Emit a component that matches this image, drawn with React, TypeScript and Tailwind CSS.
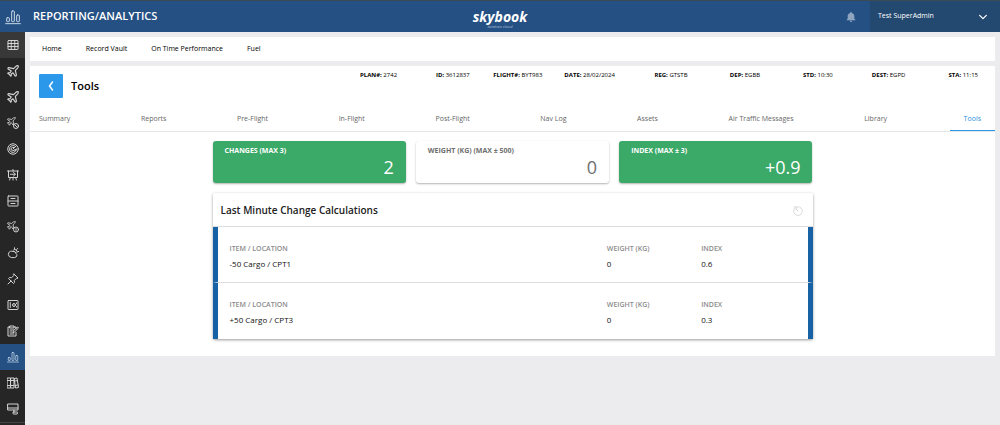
import type { ReactNode } from 'react';
import clsx from 'clsx';

// ============= Types =============
interface IconProps {
  children: ReactNode;
  className?: string;
}

interface StatCardProps {
  label: string;
  value: string;
  highlighted?: boolean;
}

interface SidebarItem {
  label: string;
  icon: ReactNode;
}

// ============= Icons =============
const Icon = ({ children, className = 'size-3' }: IconProps) => (
  <svg
    viewBox="0 0 24 24"
    fill="none"
    stroke="currentColor"
    strokeWidth="2"
    strokeLinecap="round"
    strokeLinejoin="round"
    className={className}
    aria-hidden="true"
  >
    {children}
  </svg>
);

const PLANE =
  'M17.8 19.2 16 11l3.5-3.5C21 6 21.5 4 21 3c-1-.5-3 0-4.500 1.500L13 8 4.800 6.200c-.5-.1-.9.1-1.100.5l-.3.5c-.2.5-.1 1 .3 1.300L9 12l-2 3H4l-1 1 3 2 2 3 1-1v-3l3-2 3.500 5.300c.3.4.8.5 1.300.3l.5-.2c.4-.3.6-.7.5-1.200z';

const PlaneIcon = () => (
  <Icon className="size-3.5">
    <path d={PLANE} />
  </Icon>
);

const BarsIcon = ({ className }: { className?: string }) => (
  <Icon className={className}>
    <path strokeWidth="1.500" d="M1 22h22" />
    <g strokeWidth="1.500">
      <rect x="2.500" y="13" width="4" height="6" rx="1" />
      <rect x="10" y="3" width="4" height="16" rx="1" />
      <rect x="17.500" y="9" width="4" height="10" rx="1" />
    </g>
  </Icon>
);

// ============= Data =============
const SIDEBAR_ITEMS: SidebarItem[] = [
  {
    label: 'Dashboard',
    icon: (
      <Icon>
        <rect x="2" y="3" width="20" height="18" rx="1" />
        <path d="M2 9h20M2 15h20M8.500 3v18M15.500 3v18" />
      </Icon>
    )
  },
  { label: 'Flights', icon: <PlaneIcon /> },
  { label: 'Flight Plans', icon: <PlaneIcon /> },
  {
    label: 'Cancelled Flights',
    icon: (
      <Icon>
        <g transform="translate(-2 -2) scale(.88)">
          <path d={PLANE} />
        </g>
        <circle cx="18" cy="18" r="5" fill="#262626" />
        <path d="m15 15 6 6" />
      </Icon>
    )
  },
  {
    label: 'Radar',
    icon: (
      <Icon>
        <circle cx="12" cy="12" r="10.500" />
        <path d="M17 7a7 7 0 1 0 2 5M12 12l7-7M13.500 15a3.500 3.500 0 1 1 0-6" />
        <circle cx="16" cy="14" r="1" />
      </Icon>
    )
  },
  {
    label: 'Briefing',
    icon: (
      <Icon>
        <path d="M1 4h22M3 4v13h18V4M12 1v3M7 17l-2 5M17 17l2 5M12 17v5" />
        <path d="M7 10.500h9M13 7l4 3.500-4 3.500" />
      </Icon>
    )
  },
  {
    label: 'Storage',
    icon: (
      <Icon>
        <rect x="2" y="2" width="20" height="20" rx="1" />
        <path d="M2 12h20M8 7h8M8 17h8" />
      </Icon>
    )
  },
  {
    label: 'Flight Alerts',
    icon: (
      <Icon>
        <g transform="translate(-2 -2) scale(.88)">
          <path d={PLANE} />
        </g>
        <circle cx="18" cy="17" r="5" fill="#262626" />
        <path d="M18 15v2M18 19.500v.1" />
      </Icon>
    )
  },
  {
    label: 'Weather',
    icon: (
      <Icon>
        <path d="M8 21a6.500 6.500 0 0 1-1-12.500 7 7 0 0 1 5 .5 5 5 0 0 1 6 4 4.500 4.500 0 0 1-2 8z" />
        <path d="M13 6a4.500 4.500 0 0 1 7 5M15 1.500v2M21 3l-1.500 2M22 9h1.500" />
      </Icon>
    )
  },
  {
    label: 'Pinned',
    icon: (
      <Icon>
        <path d="m14 2 8 8-2 1-1-.5-4.500 4.500.5 4-2 2L3 11l2-2 4 .5L13.500 5 13 4zM8 16l-6 6" />
      </Icon>
    )
  },
  {
    label: 'Manuals',
    icon: (
      <Icon>
        <rect x="2" y="3" width="20" height="18" rx="1" />
        <path d="M6.500 7v10" />
        <circle cx="14" cy="12" r="3" />
        <path d="M14 12h.1M19 8v1M19 15v1" />
      </Icon>
    )
  },
  {
    label: 'Forms',
    icon: (
      <Icon>
        <path d="M18 15v7H2V4h4M14 4h4v3" />
        <path d="M6 2h8v4H6zM6 10h7M6 14h4M6 18h8" />
        <path d="m12 15 1-4 8-7 2 2-8 8z" />
      </Icon>
    )
  },
  { label: 'Reporting', icon: <BarsIcon className="size-3" /> },
  {
    label: 'Library',
    icon: (
      <Icon>
        <path d="M1 2h6v20H1zM8 2h6v20H8zM15 3l5-1 3 19-5 1z" />
        <path d="M1 7h6M8 7h6M1 17h6M8 17h6M16 8l5-1M17 17l5-1" />
      </Icon>
    )
  },
  {
    label: 'Devices',
    icon: (
      <Icon>
        <path d="M2 2h20v12H2zM2 10h20M14 14v4" />
        <rect x="12" y="18" width="9" height="4" rx="1" />
      </Icon>
    )
  }
];

const ACTIVE_ITEM = 'Reporting';

const NAV_LINKS = ['Home', 'Record Vault', 'On Time Performance', 'Fuel'];

const FLIGHT_DETAILS = [
  { label: 'PLAN#:', value: '2742' },
  { label: 'ID:', value: '3612837' },
  { label: 'FLIGHT#:', value: 'BYT983' },
  { label: 'DATE:', value: '28/02/2024' },
  { label: 'REG:', value: 'GTSTB' },
  { label: 'DEP:', value: 'EGBB' },
  { label: 'STD:', value: '10:30' },
  { label: 'DEST:', value: 'EGPD' },
  { label: 'STA:', value: '11:15' }
];

const TABS = [
  'Summary',
  'Reports',
  'Pre-Flight',
  'In-Flight',
  'Post-Flight',
  'Nav Log',
  'Assets',
  'Air Traffic Messages',
  'Library',
  'Tools'
];

const CHANGES = [
  { item: '-50 Cargo / CPT1', weight: '0', index: '0.6' },
  { item: '+50 Cargo / CPT3', weight: '0', index: '0.3' }
];

// ============= Components =============
const Header = () => (
  <header className="grid h-8 grid-cols-[1fr_auto_1fr] items-center border-t border-[#3b4b55] bg-[#255083] text-white">
    <div className="flex items-center gap-2">
      <div className="flex w-[25px] justify-center text-[#c9d8e8]">
        <BarsIcon className="size-4" />
      </div>
      <h1 className="text-[11px] font-semibold">REPORTING/ANALYTICS</h1>
    </div>
    <a href="#" className="flex flex-col items-center pt-1" aria-label="skybook aviation cloud">
      <span className="text-[14px] leading-4 font-bold italic">skybook</span>
      <span className="text-[4px] leading-1 text-[#a9c0da] italic">aviation cloud</span>
    </a>
    <div className="flex h-full items-center justify-end">
      <button className="mr-3.5 text-[#8fa5bf]" aria-label="Notifications">
        <svg viewBox="0 0 24 24" fill="currentColor" className="size-2.5" aria-hidden="true">
          <path d="M12 0a2 2 0 0 0-2 2v.5C6 3.400 4 6.500 4 10v6l-3 3v1h22v-1l-3-3v-6c0-3.500-2-6.600-6-7.500V2a2 2 0 0 0-2-2zM9 21a3 3 0 0 0 6 0z" />
        </svg>
      </button>
      <button className="flex h-full w-[130px] items-center justify-between bg-[#244970] pr-3 pl-2 text-[7px]">
        Test SuperAdmin
        <Icon className="size-2.5">
          <path strokeWidth="3" d="m4 8 8 8 8-8" />
        </Icon>
      </button>
    </div>
  </header>
);

const Sidebar = () => (
  <aside className="w-[25px] shrink-0 bg-[#262626]">
    <nav className="flex flex-col border-b border-[#444444]">
      {SIDEBAR_ITEMS.map(({ label, icon }, i) => (
        <a
          key={label}
          href="#"
          aria-label={label}
          className={clsx(
            'flex h-[26px] items-center justify-center',
            label === ACTIVE_ITEM ? 'bg-[#255083] text-[#c3d6ea]' : 'text-[#d4d4d4]',
            i === 0 && 'bg-[#383838]'
          )}
        >
          {icon}
        </a>
      ))}
    </nav>
  </aside>
);

const StatCard = ({ label, value, highlighted }: StatCardProps) => (
  <div
    className={clsx(
      'flex flex-col rounded-[3px] px-3 pt-1.5 pb-1 shadow-[0_1px_2px_rgba(0,0,0,0.3)]',
      highlighted ? 'bg-[#3ba968] text-white' : 'bg-white text-[#6f6f6f]'
    )}
  >
    <span className="text-[7px] leading-2 font-bold">{label}</span>
    <span className="text-right text-[18px] leading-6">{value}</span>
  </div>
);

const Field = ({ label, value }: { label: string; value: string }) => (
  <div>
    <dt className="text-[7px] leading-2 font-semibold text-[#8c8c8c]">{label}</dt>
    <dd className="mt-[3px] text-[8px] leading-4 text-[#111111]">{value}</dd>
  </div>
);

const ChangeCalculations = () => (
  <section className="mt-2.5 rounded-xs shadow-[0_1px_3px_rgba(0,0,0,0.4)]">
    <header className="flex h-[34px] items-center justify-between border-b border-[#dddddd] pt-0.5 pr-2.5 pl-2">
      <h3 className="text-[10px] font-semibold text-[#222222]">Last Minute Change Calculations</h3>
      <button className="text-[#d2d2d6]" aria-label="History">
        <Icon className="size-2.5">
          <path d="M8 2.500A10.500 10.500 0 1 0 16 2.500M3 2l5 .5-.5 5M12 12 8 8M12 1v3" />
        </Icon>
      </button>
    </header>
    {CHANGES.map(({ item, weight, index }) => (
      <dl
        key={item}
        className="grid h-14 grid-cols-[4fr_1fr_1fr] border-x-[5px] border-x-[#1762a5] px-3 pt-[18px] not-last:border-b not-last:border-b-[#dedede]"
      >
        <Field label="ITEM / LOCATION" value={item} />
        <Field label="WEIGHT (KG)" value={weight} />
        <Field label="INDEX" value={index} />
      </dl>
    ))}
  </section>
);

// ============= Main Component =============
export default function App() {
  return (
    <div className="flex min-h-screen flex-col bg-[#ececee] font-['Open_Sans',sans-serif] text-black">
      <Header />
      <div className="flex flex-1">
        <Sidebar />
        <div className="min-w-0 flex-1 p-[5px]">
          <nav className="flex h-6 items-center gap-6 bg-white px-3 text-[7px]">
            {NAV_LINKS.map((link) => (
              <a key={link} href="#">
                {link}
              </a>
            ))}
          </nav>

          <main className="mt-[5px] bg-white pb-[17px]">
            <div className="flex items-start justify-between pt-[3px] pr-[17px] pl-[9px]">
              <div className="flex items-center gap-2 pt-[5px]">
                <button
                  className="flex size-6 items-center justify-center rounded-[1px] bg-[#2b98ea] text-white"
                  aria-label="Back"
                >
                  <Icon className="size-3">
                    <path strokeWidth="3" d="m15 4-6 8 6 8" />
                  </Icon>
                </button>
                <h2 className="text-[11px] font-semibold">Tools</h2>
              </div>
              <ul className="grid w-[69.6%] grid-cols-9 text-right text-[6px] leading-3 whitespace-nowrap">
                {FLIGHT_DETAILS.map(({ label, value }) => (
                  <li key={label}>
                    <b>{label}</b> {value}
                  </li>
                ))}
              </ul>
            </div>

            <div
              role="tablist"
              className="mt-2 flex h-[26px] justify-between border-b border-[#e6e6e6] pt-0.5 pl-px text-[7px] text-[#666666]"
            >
              {TABS.map((tab) => (
                <button
                  key={tab}
                  role="tab"
                  aria-selected={tab === 'Tools'}
                  className={clsx(
                    'whitespace-nowrap',
                    tab === 'Tools' ? 'border-b border-[#2b98ea] px-3.5 text-[#2b8fdc]' : 'px-2'
                  )}
                >
                  {tab}
                </button>
              ))}
            </div>

            <div className="mx-auto mt-[9px] max-w-[600px]">
              <div className="grid grid-cols-3 gap-2.5">
                <StatCard label="CHANGES (MAX 3)" value="2" highlighted />
                <StatCard label="WEIGHT (KG) (MAX ± 500)" value="0" />
                <StatCard label="INDEX (MAX ± 3)" value="+0.9" highlighted />
              </div>
              <ChangeCalculations />
            </div>
          </main>
        </div>
      </div>
    </div>
  );
}
